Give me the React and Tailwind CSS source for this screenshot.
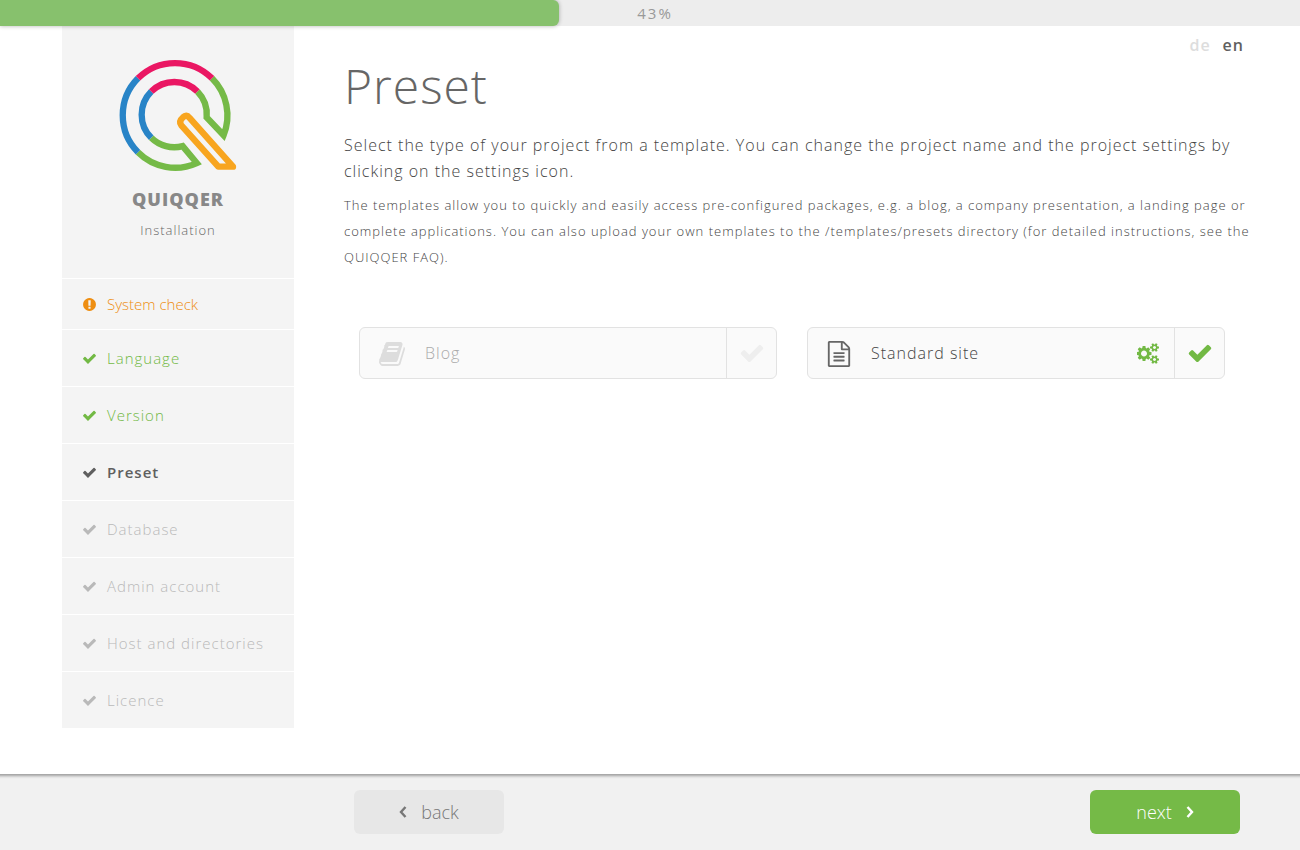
import React, { useState } from "react";

const ICONS = {
  check: {
    box: "0 0 1792 1792",
    d: "M1671 566q0 40-28 68l-724 724-136 136q-28 28-68 28t-68-28l-136-136-362-362q-28-28-28-68t28-68l136-136q28-28 68-28t68 28l294 295 656-657q28-28 68-28t68 28l136 136q28 28 28 68z",
  },
  alert: {
    box: "0 0 1792 1792",
    d: "M896 128q209 0 385.5 103t279.5 279.5 103 385.5-103 385.5-279.5 279.5-385.5 103-385.5-103-279.5-279.5-103-385.5 103-385.5 279.5-279.5 385.5-103zm128 1247v-190q0-14-9-23.5t-22-9.5h-192q-13 0-23 10t-10 23v190q0 13 10 23t23 10h192q13 0 22-9.5t9-23.5zm-2-344l18-621q0-12-10-18-10-8-24-8h-220q-14 0-24 8-10 6-10 18l17 621q0 10 10 17.5t24 7.5h185q14 0 23.5-7.5t10.5-17.5z",
  },
  book: {
    box: "0 0 1792 1792",
    d: "M1703 478q40 57 18 129l-275 906q-19 64-76.5 107.5t-122.5 43.5h-923q-77 0-148.5-53.5t-99.5-131.5q-24-67-2-127 0-4 3-27t4-37q1-8-3-21.5t-3-19.5q2-11 8-21t16.5-23.5 16.5-23.5q23-38 45-91.5t30-91.5q3-10 .5-30t-.5-28q3-11 17-28t17-23q21-36 42-92t25-90q1-9-2.5-32t.5-28q4-13 22-30.5t22-22.5q19-26 42.5-84.5t27.5-96.5q1-8-3-25.5t-2-26.5q2-8 9-18t18-23 17-21q8-12 16.5-30.5t15-35 16-36 19.5-32 26.5-23.5 36-11.5 47.5 5.5l-1 3q38-9 51-9h761q74 0 114 56t18 130l-274 906q-36 119-71.5 153.5t-128.5 34.5h-869q-27 0-38 15-11 16-1 43 24 70 144 70h923q29 0 56-15.5t35-41.5l300-987q7-22 5-57 38 15 59 43zm-1064 2q-4 13 2 22.5t20 9.5h608q13 0 25.5-9.5t16.5-22.5l21-64q4-13-2-22.5t-20-9.5h-608q-13 0-25.5 9.5t-16.5 22.5zm-83 256q-4 13 2 22.5t20 9.5h608q13 0 25.5-9.5t16.5-22.5l21-64q4-13-2-22.5t-20-9.5h-608q-13 0-25.5 9.5t-16.5 22.5z",
  },
  file: {
    box: "0 0 1792 1792",
    d: "M1596 380q28 28 48 76t20 88v1152q0 40-28 68t-68 28h-1344q-40 0-68-28t-28-68v-1600q0-40 28-68t68-28h896q40 0 88 20t76 48zm-444-244v376h376q-10-29-22-41l-313-313q-12-12-41-22zm384 1528v-1024h-416q-40 0-68-28t-28-68v-416h-768v1536h1280zm-1024-864q0-14 9-23t23-9h704q14 0 23 9t9 23v64q0 14-9 23t-23 9h-704q-14 0-23-9t-9-23v-64zm736 224q14 0 23 9t9 23v64q0 14-9 23t-23 9h-704q-14 0-23-9t-9-23v-64q0-14 9-23t23-9h704zm0 256q14 0 23 9t9 23v64q0 14-9 23t-23 9h-704q-14 0-23-9t-9-23v-64q0-14 9-23t23-9h704z",
  },
  cogs: {
    box: "0 0 1920 1792",
    d: "M832 896q0-106-75-181t-181-75-181 75-75 181 75 181 181 75 181-75 75-181zm768 512q0-52-38-90t-90-38-90 38-38 90q0 53 37.5 90.5t90.5 37.5 90.5-37.5 37.5-90.5zm0-1024q0-52-38-90t-90-38-90 38-38 90q0 53 37.5 90.5t90.5 37.5 90.5-37.5 37.5-90.5zm-384 421v185q0 10-7 19.5t-16 10.5l-155 24q-11 35-32 76 34 48 90 115 7 11 7 20 0 12-7 19-23 30-82.5 89.5t-78.5 59.5q-11 0-21-7l-115-90q-37 19-77 31-11 108-23 155-7 24-30 24h-186q-11 0-20-7.5t-10-17.5l-23-153q-34-10-75-31l-118 89q-7 7-20 7-11 0-21-8-144-133-144-160 0-9 7-19 10-14 41-53t47-61q-23-44-35-82l-152-24q-10-1-17-9.5t-7-19.5v-185q0-10 7-19.5t16-10.5l155-24q11-35 32-76-34-48-90-115-7-11-7-20 0-12 7-20 22-30 82-89t79-59q11 0 21 7l115 90q34-18 77-32 11-108 23-154 7-24 30-24h186q11 0 20 7.5t10 17.5l23 153q34 10 75 31l118-89q8-7 20-7 11 0 21 8 144 133 144 160 0 8-7 19-12 16-42 54t-45 60q23 48 34 82l152 23q10 2 17 10.5t7 19.5zm640 533v140q0 16-149 31-12 27-30 52 51 113 51 138 0 4-4 7-122 71-124 71-8 0-46-47t-52-68q-20 2-30 2t-30-2q-14 21-52 68t-46 47q-2 0-124-71-4-3-4-7 0-25 51-138-18-25-30-52-149-15-149-31v-140q0-16 149-31 13-29 30-52-51-113-51-138 0-4 4-7 4-2 35-20t59-34 30-16q8 0 46 46.5t52 67.5q20-2 30-2t30 2q51-71 92-112l6-2q4 0 124 70 4 3 4 7 0 25-51 138 17 23 30 52 149 15 149 31zm0-1024v140q0 16-149 31-12 27-30 52 51 113 51 138 0 4-4 7-122 71-124 71-8 0-46-47t-52-68q-20 2-30 2t-30-2q-14 21-52 68t-46 47q-2 0-124-71-4-3-4-7 0-25 51-138-18-25-30-52-149-15-149-31v-140q0-16 149-31 13-29 30-52-51-113-51-138 0-4 4-7 4-2 35-20t59-34 30-16q8 0 46 46.5t52 67.5q20-2 30-2t30 2q51-71 92-112l6-2q4 0 124 70 4 3 4 7 0 25-51 138 17 23 30 52 149 15 149 31z",
  },
};

function Icon({ name, className }) {
  const icon = ICONS[name];
  return (
    <svg viewBox={icon.box} fill="currentColor" aria-hidden="true" className={className}>
      <path d={icon.d} />
    </svg>
  );
}

function Angle({ points }) {
  return (
    <svg viewBox="0 0 8 12" fill="none" stroke="currentColor" strokeWidth="2.4" aria-hidden="true" className="h-3 w-2">
      <polyline points={points} />
    </svg>
  );
}

function Logo() {
  return (
    <svg viewBox="60 57 357 339" fill="none" strokeWidth="19" aria-hidden="true" className="h-[113px] w-[119px]">
      <path stroke="#75ba47" d="M339 115A157.500 157.500 0 0 1 373.700 285.800L323 232A98 98 0 0 0 295.300 154.700" />
      <path stroke="#75ba47" d="M117 337A157.500 157.500 0 0 0 293.300 369.300L251 318.400A98 98 0 0 1 156.700 293.300" />
      <path stroke="#2884c7" d="M117 115A157.500 157.500 0 0 0 117 337M156.700 154.700A98 98 0 0 0 156.700 293.300" />
      <path stroke="#ea1763" d="M117 115A157.500 157.500 0 0 1 339 115M156.700 154.700A98 98 0 0 1 295.300 154.700" />
      <path stroke="#f8a51f" strokeLinejoin="round" d="M247 256L358 380H402L271 233Q262 222 252 232Q238 244 247 256Z" />
    </svg>
  );
}

const STEPS = [
  { label: "System check", icon: "alert", style: "h-[51px] text-[#ee8e12]", text: "font-light" },
  { label: "Language", icon: "check", style: "h-[57px] text-[#72b944]", text: "font-light tracking-[1px]" },
  { label: "Version", icon: "check", style: "h-[57px] text-[#72b944]", text: "font-light tracking-[1px]" },
  { label: "Preset", icon: "check", style: "h-[57px] text-[#5f5f5f]", text: "font-semibold tracking-[1px]", current: true },
  { label: "Database", icon: "check", style: "h-[57px] text-[#b9b9b9]", text: "font-light tracking-[1px]" },
  { label: "Admin account", icon: "check", style: "h-[57px] text-[#b9b9b9]", text: "font-light tracking-[1px]" },
  { label: "Host and directories", icon: "check", style: "h-[57px] text-[#b9b9b9]", text: "font-light tracking-[1px]" },
  { label: "Licence", icon: "check", style: "h-[57px] text-[#b9b9b9]", text: "font-light tracking-[1px]" },
];

function Sidebar() {
  return (
    <aside className="w-[232px] shrink-0 self-start bg-[#f4f4f4]">
      <div className="flex h-[252px] flex-col items-center pt-[33px]">
        <Logo />
        <p className="mt-3 text-lg leading-[30px] font-extrabold tracking-[1px] text-[#888888]">QUIQQER</p>
        <p className="mt-1 text-[13px] leading-6 font-light tracking-[1px] text-[#666666]">Installation</p>
      </div>
      <nav aria-label="Installation steps">
        <ol>
          {STEPS.map((step) => (
            <li key={step.label}>
              <a
                href="#"
                aria-current={step.current ? "step" : undefined}
                className={`flex items-center gap-2.5 border-t border-white pl-5 text-[15px] ${step.style}`}
              >
                <Icon name={step.icon} className="size-[15px]" />
                <span className={step.text}>{step.label}</span>
              </a>
            </li>
          ))}
        </ol>
      </nav>
    </aside>
  );
}

const PRESETS = [
  { id: "blog", label: "Blog", icon: "book", iconStyle: "size-7" },
  { id: "standard", label: "Standard site", icon: "file", iconStyle: "size-[26px]" },
];

function PresetCard({ preset, active, onSelect }) {
  return (
    <div className="flex h-[52px] overflow-hidden rounded-md border border-[#e2e2e2] bg-[#fafafa]">
      <div className={`flex flex-1 items-center gap-[19px] pl-[18px] ${active ? "text-[#666666]" : "text-[#dddddd]"}`}>
        <Icon name={preset.icon} className={`mt-0.5 ${preset.iconStyle}`} />
        <span className={`text-base font-light tracking-[1px] ${active ? "text-[#444444]" : "text-[#aaaaaa]"}`}>
          {preset.label}
        </span>
      </div>
      {active && (
        <button type="button" aria-label={`${preset.label} settings`} className="px-3.5 text-[#72b944]">
          <Icon name="cogs" className="h-[21px] w-[23px]" />
        </button>
      )}
      <button
        type="button"
        aria-label={`Use ${preset.label}`}
        aria-pressed={active}
        onClick={onSelect}
        className={`flex w-[50px] items-center justify-center border-l border-[#e2e2e2] ${active ? "text-[#72b944]" : "text-[#eeeeee]"}`}
      >
        <Icon name="check" className="size-[26px]" />
      </button>
    </div>
  );
}

export default function App() {
  const [selected, setSelected] = useState("standard");
  const progress = 43;

  return (
    <div className="flex min-h-screen flex-col bg-white font-['Open_Sans',sans-serif] text-[#444444]">
      <div
        role="progressbar"
        aria-label="Installation progress"
        aria-valuenow={progress}
        className="relative flex h-[26px] items-center justify-center bg-[#ededed] pl-2.5"
      >
        <div
          className="absolute inset-y-0 left-0 rounded-r-md bg-[#87c16d] shadow-[0_0_4px_rgba(0,0,0,0.3)]"
          style={{ width: `${progress}%` }}
        />
        <span className="relative text-[15px] leading-7 tracking-[2px] text-[#999999]">{progress}%</span>
      </div>

      <div className="flex flex-1 gap-[50px] pr-[60px] pb-[46px] pl-[62px]">
        <Sidebar />
        <main className="relative min-w-0 flex-1 pt-7">
          <div className="absolute top-[7px] -right-1 flex gap-3 text-base leading-6 font-semibold tracking-[1px]">
            <button type="button" className="text-[#dddddd]">de</button>
            <button type="button" aria-pressed="true" className="text-[#5f5f5f]">en</button>
          </div>
          <h1 className="text-5xl leading-[64px] font-light tracking-[1px] text-[#666666]">Preset</h1>
          <p className="mt-3.5 text-base leading-[26px] font-light tracking-[1px]">
            Select the type of your project from a template. You can change the project name and the project settings by
            clicking on the settings icon.
          </p>
          <p className="mt-2 -mr-3 text-[13px] leading-[26px] font-light tracking-[1px]">
            The templates allow you to quickly and easily access pre-configured packages, e.g. a blog, a company
            presentation, a landing page or complete applications. You can also upload your own templates to the
            /templates/presets directory (for detailed instructions, see the QUIQQER FAQ).
          </p>
          <div className="mt-[57px] grid grid-cols-2 gap-[30px] px-[15px]">
            {PRESETS.map((preset) => (
              <PresetCard
                key={preset.id}
                preset={preset}
                active={selected === preset.id}
                onSelect={() => setSelected(preset.id)}
              />
            ))}
          </div>
        </main>
      </div>

      <footer className="flex h-[76px] items-center justify-between bg-[#f1f1f1] pr-[60px] pl-[354px] shadow-[inset_0_5px_3px_-3px_rgba(0,0,0,0.35)]">
        <button
          type="button"
          className="flex h-11 w-[150px] items-center justify-center gap-3.5 rounded-md bg-[#e7e7e7] text-lg font-light text-[#777777]"
        >
          <Angle points="6.500,1 2,6 6.500,11" />
          back
        </button>
        <button
          type="button"
          className="flex h-11 w-[150px] items-center justify-center gap-3.5 rounded-md bg-[#75ba47] text-lg font-light text-white"
        >
          next
          <Angle points="1.500,1 6,6 1.500,11" />
        </button>
      </footer>
    </div>
  );
}
